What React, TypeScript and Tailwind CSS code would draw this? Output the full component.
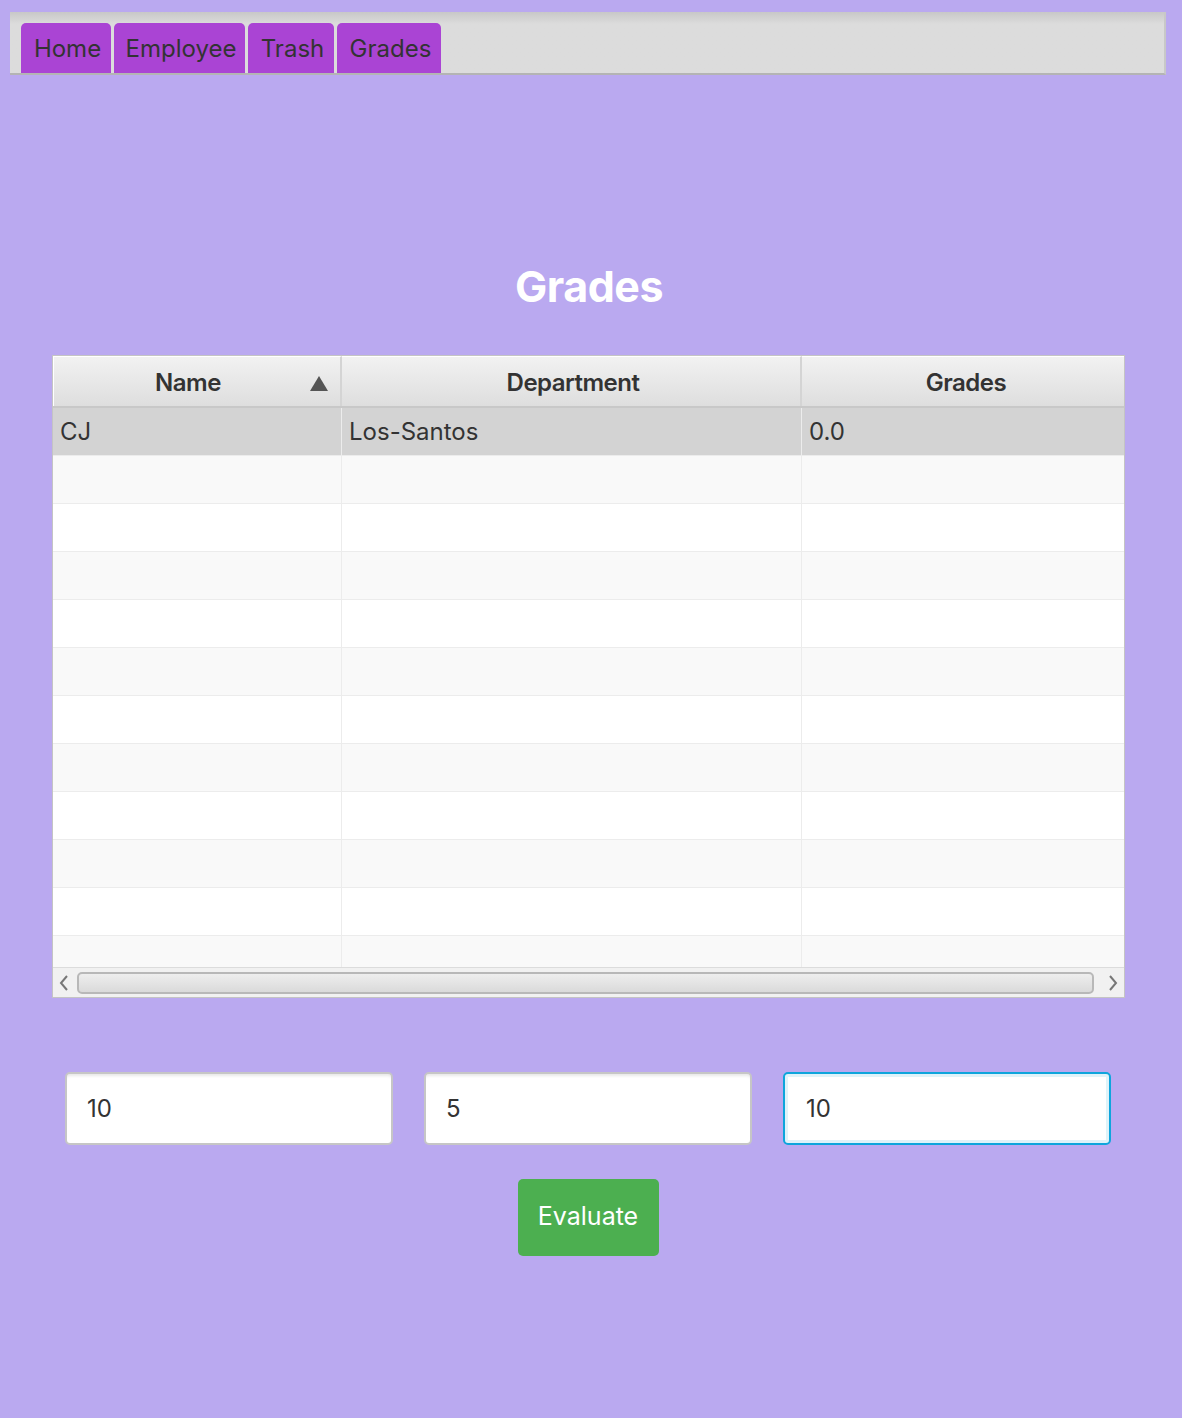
import React from "react";

const tabs = [
  { label: "Home", w: "w-[90px]" },
  { label: "Employee", w: "w-[131px]" },
  { label: "Trash", w: "w-[86px]" },
  { label: "Grades", w: "w-[104px]" },
];

const rows = Array.from({ length: 12 }, (_, i) => i);

function Row({ i }: { i: number }) {
  const first = i === 0;
  const bg = first ? "bg-[#d3d3d3]" : i % 2 === 1 ? "bg-[#f9f9f9]" : "bg-white";
  const h = i === 11 ? "h-[32px]" : "h-[48px] border-b border-[#ececec]";
  return (
    <div className={`flex shrink-0 ${bg} ${h} text-[24px] text-[#333]`}>
      <div className="w-[289px] border-r border-[#ececec] flex items-center pl-[7px]">{first ? "CJ" : ""}</div>
      <div className="w-[460px] border-r border-[#ececec] flex items-center pl-[7px]">{first ? "Los-Santos" : ""}</div>
      <div className="flex-1 flex items-center pl-[7px]">{first ? "0.0" : ""}</div>
    </div>
  );
}

export default function App() {
  return (
    <div className="w-[1182px] h-[1418px] bg-[#baa9f0] pt-[12px] px-[10px] font-['Inter',sans-serif]">
      <div className="w-[1156px] h-[63px] bg-gradient-to-b from-[#c8c8c8] via-[#dcdcdc] via-20% to-[#dcdcdc] border-r-2 border-[#c8c8c8] border-b-2 border-b-[#b4b4b4] flex items-end gap-[3px] pl-[11px]">
        {tabs.map((t) => (
          <div
            key={t.label}
            className={`${t.w} h-[50px] bg-[#aa44d4] rounded-t-[5px] flex items-center justify-center text-[24px] text-[#333] pt-[2px] pl-[3px]`}
          >
            {t.label}
          </div>
        ))}
      </div>

      <h1 className="mt-[186px] pr-[4px] text-center text-white font-bold text-[43px] leading-[50px] tracking-[-0.5px]">Grades</h1>

      <div className="mt-[44px] ml-[42px] w-[1073px] h-[643px] border border-[#c4c4c4] bg-white flex flex-col">
        <div className="flex h-[52px] shrink-0 bg-gradient-to-b from-[#f2f2f2] to-[#dedede] border-b-2 border-[#c8c8c8] text-[24px] font-semibold text-[#333] tracking-[-0.5px]">
          <div className="w-[289px] border-r-2 border-[#d4d4d4] border-l border-l-white border-t border-t-white relative flex items-center justify-center pr-[18px] pt-[3px]">
            Name
            <svg className="absolute right-[12px] top-[19px]" width="18" height="15" viewBox="0 0 18 15">
              <polygon points="9,0 18,15 0,15" fill="#555" />
            </svg>
          </div>
          <div className="w-[460px] border-r-2 border-[#d4d4d4] border-t border-t-white flex items-center justify-center pl-[4px] pt-[3px]">Department</div>
          <div className="flex-1 border-t border-t-white flex items-center justify-center pl-[6px] pt-[3px]">Grades</div>
        </div>
        <div className="flex-1 flex flex-col overflow-hidden">
          {rows.map((i) => (
            <Row key={i} i={i} />
          ))}
        </div>
        <div className="h-[30px] shrink-0 bg-[#f1f1f1] border-t border-[#dcdcdc] flex items-center px-[4px] gap-[6px]">
          <svg width="14" height="20" viewBox="0 0 14 20">
            <polyline points="10,3 4,10 10,17" fill="none" stroke="#777" strokeWidth="2" />
          </svg>
          <div className="flex-1 h-[22px] rounded-[5px] border-2 border-[#b8b8b8] bg-gradient-to-b from-[#eeeeee] to-[#dadada]" />
          <svg width="14" height="20" viewBox="0 0 14 20" className="ml-[6px]">
            <polyline points="4,3 10,10 4,17" fill="none" stroke="#777" strokeWidth="2" />
          </svg>
        </div>
      </div>

      <div className="mt-[74px] ml-[55px] flex gap-[31px]">
        <div className="w-[328px] h-[73px] rounded-[5px] border-2 border-[#c6c6c6] bg-white shadow-[inset_0_4px_3px_-2px_#e8e8e8] flex items-center pl-[20px] text-[24px] text-[#333]">10</div>
        <div className="w-[328px] h-[73px] rounded-[5px] border-2 border-[#c6c6c6] bg-white shadow-[inset_0_4px_3px_-2px_#e8e8e8] flex items-center pl-[20px] text-[24px] text-[#333]">5</div>
        <div className="w-[328px] h-[73px] rounded-[5px] border-2 border-[#0ea5dc] bg-white shadow-[inset_0_0_0_3px_#dff3f9] flex items-center pl-[21px] text-[24px] text-[#333]">10</div>
      </div>

      <div className="mt-[34px] flex justify-center pr-[6px]">
        <div className="w-[141px] h-[77px] rounded-[5px] bg-[#4caf50] text-white text-[25px] flex items-center justify-center pb-[1px]">Evaluate</div>
      </div>
    </div>
  );
}
